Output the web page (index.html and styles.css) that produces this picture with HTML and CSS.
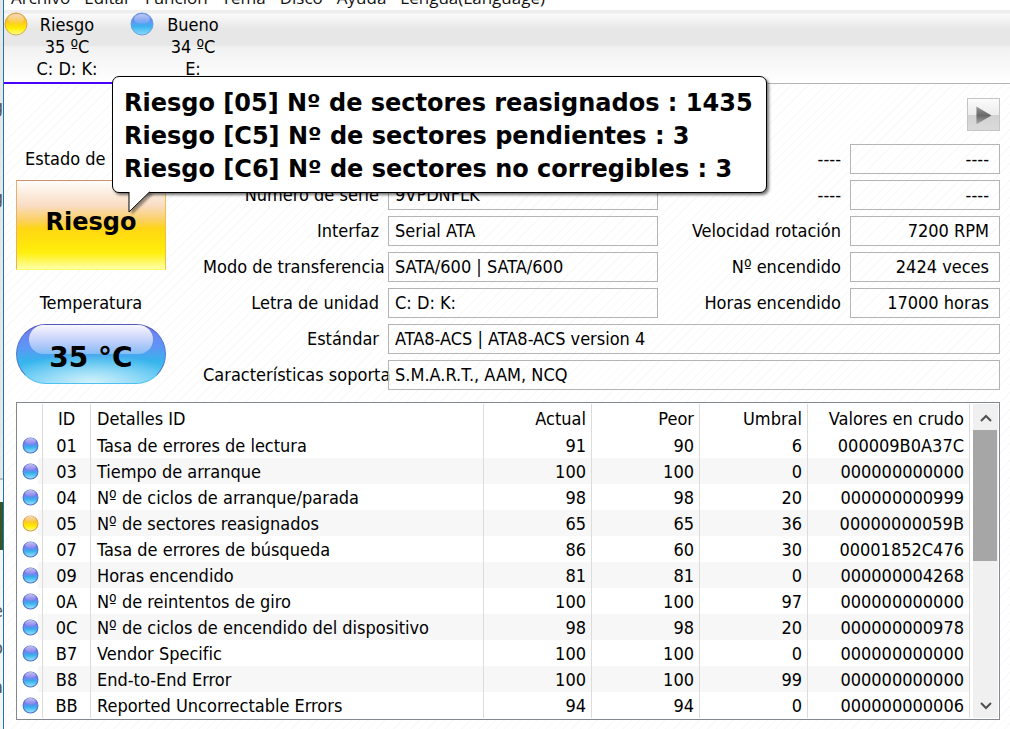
FILE: index.html
```html
<!DOCTYPE html>
<html lang="es">
<head>
<meta charset="utf-8">
<title>Estado del disco</title>
<link rel="stylesheet" href="styles.css">
</head>
<body>
<svg class="defs" aria-hidden="true">
  <defs>
    <linearGradient id="blue" x1="0" y1="0" x2="0" y2="1">
      <stop offset="0" stop-color="#6470e0"/><stop offset=".45" stop-color="#5c9cf4"/><stop offset=".6" stop-color="#38b2ee"/><stop offset="1" stop-color="#8adcfa"/>
    </linearGradient>
    <linearGradient id="row-blue" x1="0" y1="0" x2="0" y2="1">
      <stop offset="0" stop-color="#7a5fd8"/><stop offset=".35" stop-color="#7b7af0"/><stop offset=".6" stop-color="#35aeec"/><stop offset="1" stop-color="#9ce8fa"/>
    </linearGradient>
    <linearGradient id="yellow" x1="0" y1="0" x2="0" y2="1">
      <stop offset="0" stop-color="#e8a060"/><stop offset=".4" stop-color="#fcc820"/><stop offset=".7" stop-color="#ffee00"/><stop offset="1" stop-color="#ffffa0"/>
    </linearGradient>
    <linearGradient id="shine" x1="0" y1="0" x2="0" y2="1">
      <stop offset="0" stop-color="#fff" stop-opacity=".6"/><stop offset="1" stop-color="#fff" stop-opacity=".05"/>
    </linearGradient>
    <symbol id="orb-blue" viewBox="0 0 24 24"><circle cx="12" cy="12" r="11" fill="url(#blue)" stroke="#6a9fe0"/><ellipse cx="12" cy="7" rx="8" ry="5" fill="url(#shine)"/></symbol>
    <symbol id="orb-yellow" viewBox="0 0 24 24"><circle cx="12" cy="12" r="11" fill="url(#yellow)" stroke="#dca848"/><ellipse cx="12" cy="7" rx="8" ry="5" fill="url(#shine)"/></symbol>
    <symbol id="dot-blue" viewBox="0 0 16 16"><circle cx="8" cy="8" r="7" fill="url(#row-blue)" stroke="#4f70cc"/><ellipse cx="8" cy="4" rx="5" ry="3" fill="url(#shine)"/></symbol>
    <symbol id="dot-yellow" viewBox="0 0 16 16"><circle cx="8" cy="8" r="7" fill="url(#yellow)" stroke="#dca040"/><ellipse cx="8" cy="4" rx="5" ry="3" fill="url(#shine)"/></symbol>
  </defs>
</svg>
<div class="desktop" aria-hidden="true">
  <span class="scrap scrap-a">g</span><span class="scrap scrap-b">g</span>
  <span class="scrap-block"></span>
  <span class="scrap scrap-c">e</span><span class="scrap scrap-d">o</span><span class="scrap scrap-e">a</span>
</div>
<div class="window">
  <nav class="menu">
    <a href="#">Archivo</a><a href="#">Editar</a><a href="#">Función</a><a href="#">Tema</a><a href="#">Disco</a><a href="#">Ayuda</a><a href="#">Lengua(Language)</a>
  </nav>
  <div class="disks">
    <button class="disk active"><svg class="orb"><use href="#orb-yellow"/></svg><span>Riesgo</span><span>35 ºC</span><span>C: D: K:</span></button>
    <button class="disk"><svg class="orb"><use href="#orb-blue"/></svg><span>Bueno</span><span>34 ºC</span><span>E:</span></button>
  </div>
  <main class="content">
    <div class="toolbar">
      <button class="next" aria-label="Disco siguiente"><svg viewBox="0 0 33 33"><defs><linearGradient id="arrow" x1="0" y1="0" x2="0" y2="1"><stop offset="0" stop-color="#999"/><stop offset=".5" stop-color="#686868"/><stop offset="1" stop-color="#aaa"/></linearGradient></defs><path d="M9 8v19l16-9.500z" fill="url(#arrow)"/></svg></button>
    </div>
    <div class="info">
      <section class="health">
        <span class="caption caption-state">Estado de</span>
        <button class="status">Riesgo</button>
        <span class="caption caption-temp">Temperatura</span>
        <button class="temp"><span>35 °C</span></button>
      </section>
      <section class="fields">
        <label class="second" for="f1">----</label><input id="f1" class="num" value="----" readonly>
        <label for="serial">Número de serie</label><input id="serial" value="9VPDNFLK" readonly>
        <label for="f2">----</label><input id="f2" class="num" value="----" readonly>
        <label for="iface">Interfaz</label><input id="iface" value="Serial ATA" readonly>
        <label for="rpm">Velocidad rotación</label><input id="rpm" class="num" value="7200 RPM" readonly>
        <label class="long" for="mode">Modo de transferencia</label><input id="mode" value="SATA/600 | SATA/600" readonly>
        <label for="count">Nº encendido</label><input id="count" class="num" value="2424 veces" readonly>
        <label for="letter">Letra de unidad</label><input id="letter" value="C: D: K:" readonly>
        <label for="hours">Horas encendido</label><input id="hours" class="num" value="17000 horas" readonly>
        <label for="std">Estándar</label><input id="std" class="wide" value="ATA8-ACS | ATA8-ACS version 4" readonly>
        <label class="long" for="feat">Características soporta</label><input id="feat" class="wide" value="S.M.A.R.T., AAM, NCQ" readonly>
      </section>
    </div>
    <div class="list">
      <table>
        <colgroup><col class="c-dot"><col class="c-id"><col><col class="c-num"><col class="c-num"><col class="c-num"><col class="c-raw"></colgroup>
        <thead><tr><th></th><th>ID</th><th>Detalles ID</th><th>Actual</th><th>Peor</th><th>Umbral</th><th>Valores en crudo</th></tr></thead>
        <tbody>
          <tr><td><svg><use href="#dot-blue"/></svg></td><td>01</td><td>Tasa de errores de lectura</td><td>91</td><td>90</td><td>6</td><td>000009B0A37C</td></tr>
          <tr><td><svg><use href="#dot-blue"/></svg></td><td>03</td><td>Tiempo de arranque</td><td>100</td><td>100</td><td>0</td><td>000000000000</td></tr>
          <tr><td><svg><use href="#dot-blue"/></svg></td><td>04</td><td>Nº de ciclos de arranque/parada</td><td>98</td><td>98</td><td>20</td><td>000000000999</td></tr>
          <tr><td><svg><use href="#dot-yellow"/></svg></td><td>05</td><td>Nº de sectores reasignados</td><td>65</td><td>65</td><td>36</td><td>00000000059B</td></tr>
          <tr><td><svg><use href="#dot-blue"/></svg></td><td>07</td><td>Tasa de errores de búsqueda</td><td>86</td><td>60</td><td>30</td><td>00001852C476</td></tr>
          <tr><td><svg><use href="#dot-blue"/></svg></td><td>09</td><td>Horas encendido</td><td>81</td><td>81</td><td>0</td><td>000000004268</td></tr>
          <tr><td><svg><use href="#dot-blue"/></svg></td><td>0A</td><td>Nº de reintentos de giro</td><td>100</td><td>100</td><td>97</td><td>000000000000</td></tr>
          <tr><td><svg><use href="#dot-blue"/></svg></td><td>0C</td><td>Nº de ciclos de encendido del dispositivo</td><td>98</td><td>98</td><td>20</td><td>000000000978</td></tr>
          <tr><td><svg><use href="#dot-blue"/></svg></td><td>B7</td><td>Vendor Specific</td><td>100</td><td>100</td><td>0</td><td>000000000000</td></tr>
          <tr><td><svg><use href="#dot-blue"/></svg></td><td>B8</td><td>End-to-End Error</td><td>100</td><td>100</td><td>99</td><td>000000000000</td></tr>
          <tr><td><svg><use href="#dot-blue"/></svg></td><td>BB</td><td>Reported Uncorrectable Errors</td><td>94</td><td>94</td><td>0</td><td>000000000006</td></tr>
        </tbody>
      </table>
      <div class="scrollbar">
        <button aria-label="Subir"><svg viewBox="0 0 12 8"><path d="M1 7l5-5 5 5"/></svg></button>
        <div class="track"><div class="thumb"></div></div>
        <button aria-label="Bajar"><svg viewBox="0 0 12 8"><path d="M1 1l5 5 5-5"/></svg></button>
      </div>
    </div>
  </main>
</div>
<div class="balloon" role="tooltip">
  <div>Riesgo [05] Nº de sectores reasignados : 1435</div>
  <div>Riesgo [C5] Nº de sectores pendientes : 3</div>
  <div>Riesgo [C6] Nº de sectores no corregibles : 3</div>
  <svg class="tail" viewBox="0 0 24 23"><path d="M1 0v21l21-20.500z" fill="#fff"/><path d="M1 1v20l20.500-20" fill="none" stroke="#000"/></svg>
</div>
</body>
</html>
```

FILE: styles.css
```css
* { box-sizing: border-box; }
body {
  margin: 0;
  display: flex;
  height: 100vh;
  overflow: hidden;
  font: 18px/22px "DejaVu Sans Condensed", "Noto Sans", sans-serif;
  color: #000;
}
button, input { font: inherit; color: inherit; margin: 0; }
.defs { position: absolute; width: 0; height: 0; }

.desktop {
  position: relative;
  width: 3px;
  flex: none;
  overflow: hidden;
  background: linear-gradient(#e6e6e6 478px, #bbb 478px, #bbb 480px, #f4f4f4 480px);
}
.scrap { position: absolute; right: 0; color: #555; }
.scrap-a { top: 96px; }
.scrap-b { top: 187px; }
.scrap-c { top: 600px; }
.scrap-d { top: 637px; }
.scrap-e { top: 676px; }
.scrap-block { position: absolute; top: 502px; left: 0; width: 3px; height: 48px; background: #375623; }

.window {
  flex: 1;
  min-width: 0;
  display: flex;
  flex-direction: column;
  border-left: 1px solid #1a76b4;
}
.menu {
  display: flex;
  align-items: flex-end;
  gap: 14px;
  height: 10px;
  padding-left: 7px;
  overflow: hidden;
  background: #fff;
  font: 17px/24px "Open Sans", "Noto Sans", sans-serif;
}
.menu a { color: #111; text-decoration: none; }

.disks {
  display: flex;
  height: 74px;
  border-bottom: 1px solid #b4b4b4;
  background: linear-gradient(#eee 0, #eee 3px, #fafafa 4px, #e7e7e7 19px, #e7e7e7 35px, #f1f1f1 37px, #fff 72px);
}
.disk {
  position: relative;
  display: flex;
  flex-direction: column;
  align-items: center;
  width: 126px;
  height: 74px;
  padding: 4px 0 0;
  border: 0;
  border-bottom: 2px solid transparent;
  background: none;
}
.disk.active { border-bottom-color: #4a00ff; }
.orb { position: absolute; left: 0; top: 2px; width: 24px; height: 24px; }

.content {
  flex: 1;
  display: flex;
  flex-direction: column;
  padding: 14px 10px 9px 12px;
  background: repeating-linear-gradient(135deg, #fff 0, #fff 5px, #f9f9f9 5px, #f9f9f9 6px);
}
.toolbar { display: flex; justify-content: flex-end; margin-bottom: 13px; }
.next {
  width: 33px;
  height: 33px;
  padding: 0;
  border: 1px solid #c4c4c4;
  background: linear-gradient(#fbfbfb, #ececec 50%, #d2d2d2 52%, #dadada);
}
.next svg { display: block; width: 31px; height: 31px; }

.info { display: flex; gap: 37px; margin-bottom: 12px; }
.health { display: flex; flex-direction: column; width: 150px; flex: none; }
.caption { height: 30px; line-height: 30px; margin-bottom: 6px; }
.caption-state { padding-left: 9px; }
.caption-temp { text-align: center; }
.status, .temp { padding: 0; font-family: "DejaVu Sans", sans-serif; font-weight: bold; }
.status {
  height: 90px;
  margin-bottom: 18px;
  padding-bottom: 6px;
  border: 1px solid;
  border-color: #d0946c #f0c040 #ffff60 #e8b070;
  background: linear-gradient(#fffdfc 0, #f9dcc2 28%, #fbd060 45%, #ffd614 54%, #ffe90a 75%, #fff010 82%, #ffffa8 100%);
  font-size: 24px;
}
.temp {
  position: relative;
  height: 60px;
  padding-top: 8px;
  border: 1px solid;
  border-color: #5058b8 #5078d0 #50c0f0;
  border-radius: 30px;
  background: radial-gradient(ellipse 60% 50% at 50% 100%, #d4f2fc, transparent), linear-gradient(#7878f4 0, #5c98f4 40%, #36b4ec 62%, #5cc8f4 100%);
  font-size: 28px;
}
.temp::before {
  content: "";
  position: absolute;
  left: 12px;
  right: 12px;
  top: 0;
  height: 29px;
  border-radius: 15px;
  background: linear-gradient(rgba(255,255,255,.95), rgba(255,255,255,.3));
}
.temp span { position: relative; }

.fields {
  flex: 1;
  display: grid;
  grid-template-columns: 185px minmax(0, 270fr) 192px minmax(0, 150px);
  grid-auto-rows: 30px;
  row-gap: 6px;
}
.fields label { padding-right: 9px; line-height: 30px; text-align: right; white-space: nowrap; }
.fields .second { grid-column: 3; }
.fields .long { padding-right: 0; text-align: left; }
.fields input {
  width: 100%;
  height: 30px;
  padding: 0 10px 2px 6px;
  border: 1px solid #b4b4b4;
  border-radius: 0;
  background: transparent;
  outline: none;
}
.fields .num { text-align: right; }
.fields .wide { grid-column: 2 / -1; }

.list { display: flex; gap: 3px; padding: 1px; border: 1px solid #828790; background: #fff; }
table { flex: 1; table-layout: fixed; border-collapse: separate; border-spacing: 0; }
.c-dot { width: 25px; }
.c-id { width: 48px; }
.c-num { width: 108px; }
.c-raw { width: 162px; }
th, td {
  height: 26px;
  padding: 1px 5px 0;
  border-right: 1px solid #dcdcdc;
  font-weight: normal;
  text-align: right;
  white-space: nowrap;
}
th { height: 28px; }
th:nth-child(2), td:nth-child(2) { text-align: center; }
th:nth-child(3), td:nth-child(3) { padding-left: 6px; text-align: left; }
td:first-child { padding: 0 0 0 4px; }
td svg { display: block; width: 17px; height: 17px; }
tbody tr:nth-child(even) td { background: #f7f7f7; }
tbody tr:nth-child(even) td:first-child { background: linear-gradient(90deg, #fff 20px, #f7f7f7 20px); }

.scrollbar { display: flex; flex-direction: column; width: 25px; background: #f0f0f0; }
.scrollbar button { height: 26px; padding: 2px 0 0; border: 0; background: none; line-height: 0; }
.scrollbar svg { width: 12px; height: 8px; fill: none; stroke: #505050; stroke-width: 2; }
.track { flex: 1; }
.thumb { width: 24px; height: 50%; background: #a6a6a6; }

.balloon {
  position: absolute;
  left: 112px;
  top: 76px;
  padding: 10px 13px 6px 11px;
  border: 1px solid #000;
  border-radius: 7px;
  background: #fff;
  box-shadow: 2px 2px 3px rgba(0,0,0,.55);
  font: bold 24px/33px "DejaVu Sans", sans-serif;
  white-space: nowrap;
}
.tail {
  position: absolute;
  left: 15px;
  top: 114px;
  width: 24px;
  height: 23px;
  filter: drop-shadow(3px 2px 1px rgba(0,0,0,.4));
}
```
